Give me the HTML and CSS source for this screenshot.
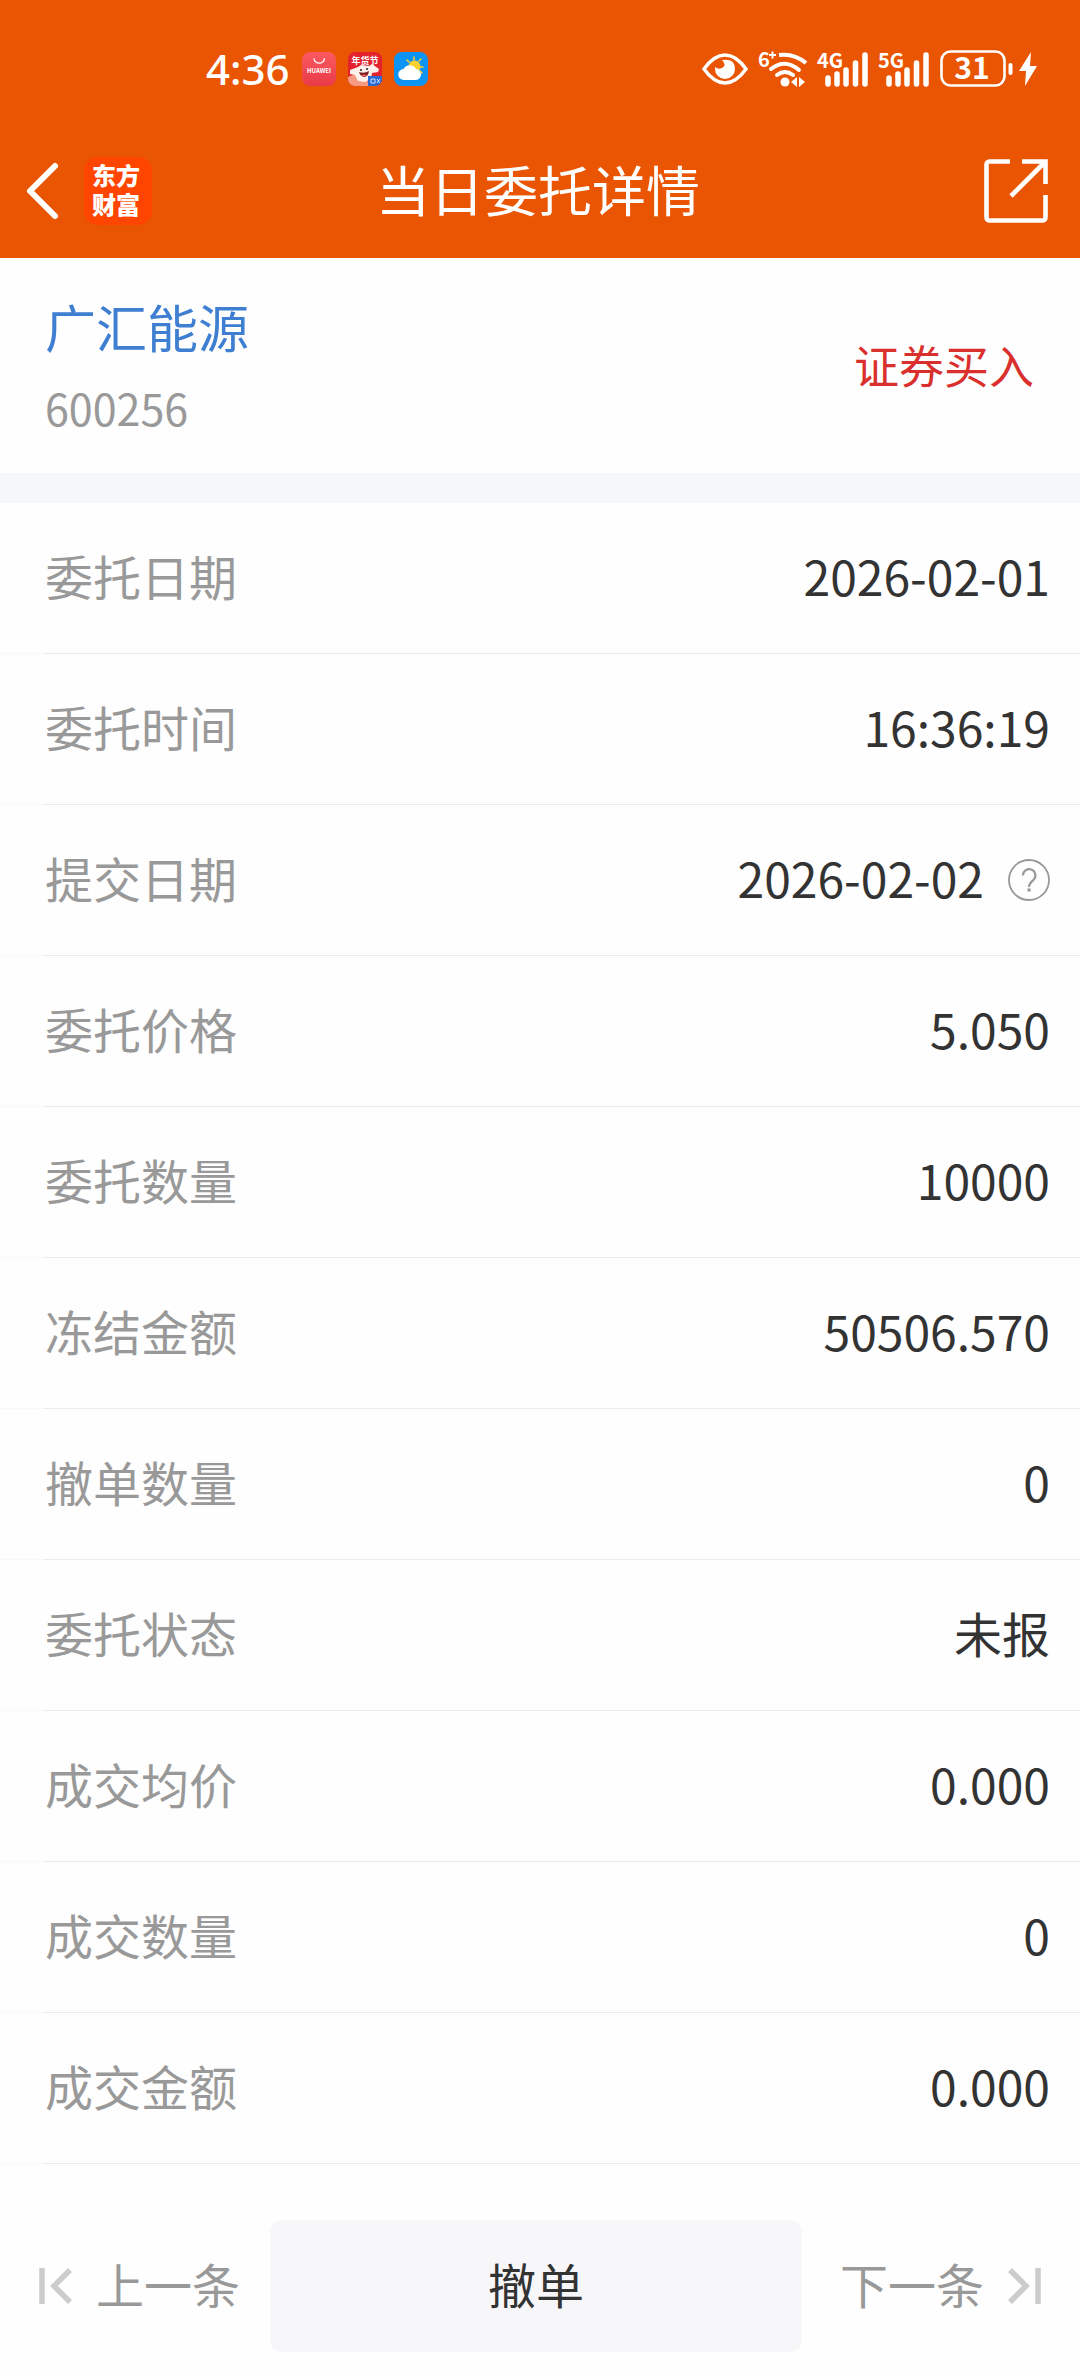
FILE: index.html
```html
<!DOCTYPE html>
<html lang="zh-CN">
<head>
<meta charset="utf-8">
<meta name="viewport" content="width=device-width, initial-scale=1">
<title>当日委托详情</title>
<link rel="stylesheet" href="styles.css">
</head>
<body>
<header class="top">
  <div class="status">
    <div class="status-left">
      <span class="clock">4:36</span>
      <svg class="app-icon" viewBox="0 0 34 34" aria-hidden="true">
        <defs><linearGradient id="store" x1="0" y1="0" x2="0" y2="1"><stop offset="0" stop-color="#fb5a60"/><stop offset="1" stop-color="#e93a48"/></linearGradient></defs>
        <rect width="34" height="34" rx="8" fill="url(#store)"/>
        <path d="M12 6.500a5.200 4.600 0 0 0 10.400 0" fill="none" stroke="#fff" stroke-width="1.200" stroke-linecap="round"/>
        <text x="17" y="21" font-size="6" font-weight="700" text-anchor="middle" fill="#fff">HUAWEI</text>
      </svg>
      <svg class="app-icon" viewBox="0 0 34 34" aria-hidden="true">
        <defs><clipPath id="round"><rect width="34" height="34" rx="7"/></clipPath></defs>
        <g clip-path="url(#round)">
          <rect width="34" height="34" fill="#e3222d"/>
          <path d="M0 25l7-3 10 4 6 8H0z" fill="#f79a84"/>
          <path d="M2 18l8-3 3-2 8 1 3-2 7 5-1 3-6 1-1 6-6 3-7-1-3-6-5-1z" fill="#fff0ea"/>
          <path d="M11 20q5 2 10-1-1 6-5 6-4-1-5-5z" fill="#7b1c22"/>
          <path d="M13 23q3-1 6 0-2 3-6 0z" fill="#f2625c"/>
          <circle cx="13" cy="18" r="1" fill="#222"/><circle cx="19" cy="17" r="1" fill="#222"/>
          <path d="M20 24h14v10H20z" fill="#2869d2"/>
          <path d="M23 27h4v4h-4zM29 27l3 4m0-4l-3 4" fill="none" stroke="#cfe3ff"/>
          <text x="17" y="12" font-size="9" font-weight="700" text-anchor="middle" fill="#fff">年货节</text>
        </g>
      </svg>
      <svg class="app-icon" viewBox="0 0 34 34" aria-hidden="true">
        <rect width="34" height="34" rx="8" fill="#0c93f3"/>
        <path d="M20 5v3M13 8l2 2M27 7l-2 2M29 15h-3M28 21l-2-2" stroke="#ffd12e" stroke-width="1.500" stroke-linecap="round"/>
        <circle cx="20.500" cy="14.500" r="6" fill="#ffd12e"/>
        <path d="M10 28a5.500 5.500 0 0 1-.5-11 7 7 0 0 1 12.500 0 5.500 5.500 0 1 1-1 11z" fill="#fff"/>
      </svg>
    </div>
    <div class="status-right">
      <svg class="eye" viewBox="0 0 46 32" aria-hidden="true">
        <path d="M2 16Q12 2 23 2t21 14Q34 30 23 30T2 16z" fill="none" stroke="#fff" stroke-width="3.500"/>
        <path d="M20 7q13-2 13 9a10 10 0 0 1-20 0q0-1 .3-2 2.700 3 6.700 1 5-3 0-8z" fill="#fff"/>
      </svg>
      <svg class="wifi" viewBox="0 0 48 36" aria-hidden="true">
        <text x="-1" y="16" font-size="20" font-weight="700" fill="#fff">6</text>
        <path d="M10 4h7M13.500 .5v7" stroke="#fff" stroke-width="2"/>
        <g fill="none" stroke="#fff" stroke-width="4">
          <path d="M20 4q15-2 27 8"/>
          <path d="M12 18q14-11 28 1" stroke-linecap="round"/>
          <path d="M18 24q8-6 16 0" stroke-linecap="round"/>
        </g>
        <circle cx="26" cy="31" r="4.500" fill="#fff"/>
        <path d="M38 26v10l-6-5zM40 26v10l6-5z" fill="#fff"/>
      </svg>
      <svg class="signal" viewBox="0 0 50 36" aria-hidden="true">
        <text x="-1" y="17" font-size="20" font-weight="700" fill="#fff">4G</text>
        <path d="M10 27v6M19 23v10M28 19v14M37.500 12v21M47 4v29" stroke="#fff" stroke-width="5.500" stroke-linecap="round"/>
      </svg>
      <svg class="signal" viewBox="0 0 50 36" aria-hidden="true">
        <text x="-1" y="17" font-size="20" font-weight="700" fill="#fff">5G</text>
        <path d="M10 27v6M19 23v10M28 19v14M37.500 12v21M47 4v29" stroke="#fff" stroke-width="5.500" stroke-linecap="round"/>
      </svg>
      <svg class="battery" viewBox="0 0 98 38" aria-hidden="true">
        <rect x="1.500" y="1.500" width="63" height="34" rx="9" fill="none" stroke="#fff" stroke-width="2.600"/>
        <text x="32" y="29" font-size="30" font-weight="700" text-anchor="middle" fill="#fff">31</text>
        <path d="M70.500 15v8" stroke="#fff" stroke-width="4" stroke-linecap="round"/>
        <path d="M91 2L79 21h7l-1 15 12-20h-7z" fill="#fff"/>
      </svg>
    </div>
  </div>
  <nav class="nav">
    <div class="nav-side">
      <button class="icon-button" type="button" aria-label="返回">
        <svg class="back" viewBox="2 0 32 56"><path d="M29 3L4 28l25 25" fill="none" stroke="#fff" stroke-width="6" stroke-linecap="round" stroke-linejoin="round"/></svg>
      </button>
      <span class="brand">东方<br>财富</span>
    </div>
    <h1 class="title">当日委托详情</h1>
    <div class="nav-side nav-end">
      <button class="icon-button" type="button" aria-label="分享">
        <svg class="share" viewBox="0 0 64 64"><path d="M26 2.500H5.500a3 3 0 0 0-3 3v53a3 3 0 0 0 3 3h53a3 3 0 0 0 3-3V36M38 2.500h23.500V25M61 3L27 37" fill="none" stroke="#fff" stroke-width="4.600"/></svg>
      </button>
    </div>
  </nav>
</header>
<main>
  <section class="stock">
    <div>
      <a class="stock-name" href="#">广汇能源</a>
      <div class="stock-code">600256</div>
    </div>
    <span class="side">证券买入</span>
  </section>
  <dl class="details">
    <div class="row"><dt>委托日期</dt><dd>2026-02-01</dd></div>
    <div class="row"><dt>委托时间</dt><dd>16:36:19</dd></div>
    <div class="row"><dt>提交日期</dt><dd>2026-02-02
      <button class="icon-button" type="button" aria-label="说明">
        <svg class="help" viewBox="0 0 42 42"><circle cx="21" cy="21" r="20" fill="none" stroke="#999" stroke-width="1.800"/><path d="M15 16.500a6.200 6.200 0 1 1 11 3.800q-5 4.200-5 7.700" fill="none" stroke="#999" stroke-width="2.200"/><path d="M19.500 29.500h3.200v3h-3.200z" fill="#999"/></svg>
      </button></dd></div>
    <div class="row"><dt>委托价格</dt><dd>5.050</dd></div>
    <div class="row"><dt>委托数量</dt><dd>10000</dd></div>
    <div class="row"><dt>冻结金额</dt><dd>50506.570</dd></div>
    <div class="row"><dt>撤单数量</dt><dd>0</dd></div>
    <div class="row"><dt>委托状态</dt><dd>未报</dd></div>
    <div class="row"><dt>成交均价</dt><dd>0.000</dd></div>
    <div class="row"><dt>成交数量</dt><dd>0</dd></div>
    <div class="row"><dt>成交金额</dt><dd>0.000</dd></div>
  </dl>
</main>
<footer class="actions">
  <button class="step" type="button">
    <svg class="step-icon" viewBox="0 0 34 36" aria-hidden="true"><path d="M4 0v36M32 2L16 18l16 16" fill="none" stroke="#ccc" stroke-width="5.500"/></svg>
    上一条
  </button>
  <button class="cancel" type="button">撤单</button>
  <button class="step step-next" type="button">
    下一条
    <svg class="step-icon" viewBox="0 0 34 36" aria-hidden="true"><path d="M30 0v36M2 2l16 16L2 34" fill="none" stroke="#ccc" stroke-width="5.500"/></svg>
  </button>
</footer>
</body>
</html>
```

FILE: styles.css
```css
* {
  box-sizing: border-box;
}

body {
  margin: 0;
  background: #fefefe;
  color: #333;
  font-family: "Noto Sans CJK SC", sans-serif;
  font-size: 48px;
  line-height: 72px;
}

button {
  border: 0;
  padding: 0;
  background: none;
  color: inherit;
  font: inherit;
}

svg {
  display: block;
  flex: none;
  overflow: visible;
}

.top {
  background: #ea5504;
  color: #fff;
}

/* Status bar */
.status {
  display: flex;
  justify-content: space-between;
  align-items: center;
  height: 124px;
  padding: 14px 42px 0 206px;
}

.status-left,
.status-right {
  display: flex;
  align-items: center;
}

.status-left {
  gap: 12px;
}

.status-right {
  gap: 11px;
}

.clock {
  font-family: "Noto Sans", sans-serif;
  font-size: 42px;
  font-weight: 500;
  line-height: 48px;
}

.app-icon {
  width: 34px;
  height: 34px;
}

.eye {
  width: 46px;
  height: 32px;
}

.wifi {
  width: 48px;
  height: 36px;
}

.signal {
  width: 50px;
  height: 36px;
}

.battery {
  width: 98px;
  height: 38px;
}

/* Title bar */
.nav {
  display: grid;
  grid-template-columns: 1fr auto 1fr;
  align-items: center;
  height: 134px;
  padding: 0 32px 0 28px;
}

.nav-side {
  display: flex;
  align-items: center;
  gap: 24px;
}

.nav-end {
  justify-content: flex-end;
}

.icon-button {
  display: block;
  flex: none;
}

.back {
  width: 32px;
  height: 56px;
}

.brand {
  width: 68px;
  height: 68px;
  padding: 3px 4px 0 0;
  border-radius: 14px;
  background: #ff4500;
  font-size: 24px;
  font-weight: 900;
  line-height: 29px;
  text-align: center;
}

.title {
  margin: 0;
  padding-bottom: 4px;
  font-size: 54px;
  font-weight: 400;
  line-height: 80px;
}

.share {
  width: 64px;
  height: 64px;
}

/* Stock summary */
.stock {
  display: flex;
  justify-content: space-between;
  align-items: center;
  padding: 28px 46px 30px 45px;
  border-bottom: 30px solid #f6f7f9;
}

.stock > div {
  display: grid;
  gap: 5px;
}

.stock-name {
  color: #3f7fd1;
  font-size: 51px;
  line-height: 80px;
  text-decoration: none;
}

.stock-code {
  color: #999;
  font-size: 43px;
}

.side {
  color: #d9302e;
  font-size: 45px;
}

/* Order details */
.details {
  margin: 0;
}

.row {
  display: flex;
  justify-content: space-between;
  align-items: center;
  padding: 36px 30px 42px 45px;
  border-bottom: 1px solid;
  border-image: linear-gradient(to right, #f8f8f8 45px, #ebebeb 45px) 1;
}

.row dt {
  color: #999;
}

.row dd {
  display: flex;
  align-items: center;
  gap: 24px;
  margin: 0;
}

.help {
  width: 42px;
  height: 42px;
  margin-top: 6px;
}

/* Bottom actions */
.actions {
  display: grid;
  grid-template-columns: 270fr 532fr 278fr;
  align-items: center;
  padding: 56px 0 24px;
}

.step {
  display: flex;
  align-items: center;
  gap: 24px;
  padding: 0 0 6px 38px;
  color: #999;
}

.step-next {
  justify-content: flex-end;
  padding: 0 38px 6px 0;
}

.step-icon {
  width: 34px;
  height: 36px;
  margin-top: 6px;
}

.cancel {
  padding: 27px 0 33px;
  border-radius: 12px;
  background: #f7f7fa;
}
```
